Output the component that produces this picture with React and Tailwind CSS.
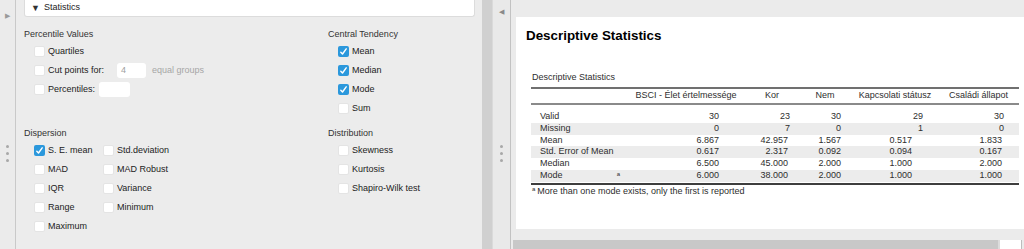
import React from 'react';

const ROWS = [
  { label: 'Valid', int: true, vals: ['30', '23', '30', '29', '30'] },
  { label: 'Missing', int: true, vals: ['0', '7', '0', '1', '0'] },
  { label: 'Mean', vals: ['6.867', '42.957', '1.567', '0.517', '1.833'] },
  { label: 'Std. Error of Mean', vals: ['0.617', '2.317', '0.092', '0.094', '0.167'] },
  { label: 'Median', vals: ['6.500', '45.000', '2.000', '1.000', '2.000'] },
  { label: 'Mode', note: 'a', vals: ['6.000', '38.000', '2.000', '1.000', '1.000'] },
];

const HEADERS = ['BSCI - Élet értelmessége', 'Kor', 'Nem', 'Kapcsolati státusz', 'Családi állapot'];

// right padding per column, integers sit a little further right in some columns
const PAD_DEC = ['pr-[27px]', 'pr-[10px]', 'pr-[11px]', 'pr-[26px]', 'pr-[17px]'];
const PAD_INT = ['pr-[27px]', 'pr-[8px]', 'pr-[11px]', 'pr-[15px]', 'pr-[15px]'];

function Check({ on }) {
  if (on) {
    return (
      <span className="w-[11px] h-[11px] rounded-[2px] bg-[#2b98dc] flex items-center justify-center shrink-0">
        <svg viewBox="0 0 11 11" className="w-[11px] h-[11px]">
          <path d="M2.8 6.2 L4.5 8 L8.2 2.8" stroke="white" strokeWidth="1.4" fill="none" strokeLinecap="round" strokeLinejoin="round" />
        </svg>
      </span>
    );
  }
  return <span className="w-[11px] h-[11px] rounded-[2px] bg-white border border-[#e4e4e4] shrink-0" />;
}

function Opt({ label, on, children }) {
  return (
    <div className="h-[19px] flex items-center gap-[3px]">
      <Check on={on} />
      <span className="whitespace-nowrap">{label}</span>
      {children}
    </div>
  );
}

function Section({ title, children }) {
  return (
    <div>
      <div className="h-[12px] leading-[12px] text-[#333]">{title}</div>
      <div className="mt-[2px] pl-[10px]">{children}</div>
    </div>
  );
}

function Dots() {
  return (
    <div className="flex flex-col gap-[4px]">
      <span className="w-[3px] h-[3px] rounded-full bg-[#a8a8a8]" />
      <span className="w-[3px] h-[3px] rounded-full bg-[#a8a8a8]" />
      <span className="w-[3px] h-[3px] rounded-full bg-[#a8a8a8]" />
    </div>
  );
}

export default function App() {
  return (
    <div className="w-[1024px] h-[249px] flex overflow-hidden font-['Liberation_Sans',Arial,sans-serif] text-[9px] text-[#222] bg-[#ececec]">
      {/* left handle */}
      <div className="w-[16px] shrink-0 bg-[#ebebeb] border-r border-[#c9c9c9] flex flex-col items-center">
        <span className="mt-[12px] text-[7px] leading-[8px] text-[#9a9a9a]">▶</span>
        <div className="mt-[125px]"><Dots /></div>
      </div>

      {/* options panel */}
      <div className="w-[466px] shrink-0 bg-[#ececec] flex flex-col">
        <div className="ml-[8px] mr-[7px] h-[17px] bg-white border border-t-0 border-[#dcdcdc] rounded-b-[3px] flex items-center pl-[6px] gap-[4px]">
          <span className="text-[9px] leading-[9px] text-[#333]">▼</span>
          <span>Statistics</span>
        </div>

        <div className="grid grid-cols-[304px_1fr] gap-y-[9px] pl-[8px] pt-[11px]">
          <Section title="Percentile Values">
            <Opt label="Quartiles" />
            <Opt label="Cut points for:">
              <span className="ml-[10px] w-[29px] h-[15px] bg-white rounded-[3px] text-[#a0a0a0] pl-[4px] leading-[15px]">4</span>
              <span className="ml-[3px] text-[#a6a6a6]">equal groups</span>
            </Opt>
            <Opt label="Percentiles:">
              <span className="ml-[1px] w-[31px] h-[15px] bg-white rounded-[3px]" />
            </Opt>
          </Section>
          <Section title="Central Tendency">
            <Opt label="Mean" on />
            <Opt label="Median" on />
            <Opt label="Mode" on />
            <Opt label="Sum" />
          </Section>
          <Section title="Dispersion">
            <div className="grid grid-cols-[69px_auto] w-[180px]">
              <Opt label="S. E. mean" on />
              <Opt label="Std.deviation" />
              <Opt label="MAD" />
              <Opt label="MAD Robust" />
              <Opt label="IQR" />
              <Opt label="Variance" />
              <Opt label="Range" />
              <Opt label="Minimum" />
              <Opt label="Maximum" />
            </div>
          </Section>
          <Section title="Distribution">
            <Opt label="Skewness" />
            <Opt label="Kurtosis" />
            <Opt label="Shapiro-Wilk test" />
          </Section>
        </div>
      </div>

      {/* splitter */}
      <div className="w-[11px] shrink-0 bg-[#d0d0d0] border-r border-[#dadada]" />
      <div className="w-[18px] shrink-0 bg-[#e9e9e9] border-r border-[#c2c2c2] flex flex-col items-center">
        <span className="mt-[8px] text-[7px] leading-[8px] text-[#8a8a8a]">◀</span>
        <div className="mt-[129px]"><Dots /></div>
      </div>

      {/* output */}
      <div className="flex-1 flex flex-col bg-[#ebebeb]">
        <div className="ml-[5px] mt-[17px] h-[212px] bg-white flex flex-col">
          <div className="mt-[11px] ml-[10px] h-[16px] leading-[16px] text-[13.4px] font-bold text-black">Descriptive Statistics</div>

          <div className="mt-[27px] ml-[15px] w-[488px] text-[#2e2e2e]">
            <div className="h-[12px] leading-[12px] pl-[1px]">Descriptive Statistics</div>
            <div className="mt-[4px] h-[2px] bg-[#707070]" />
            <div className="grid grid-cols-[95px_120px_52px_54px_86px_81px] h-[14px] items-center">
              <div />
              {HEADERS.map((h) => (
                <div key={h} className="text-center whitespace-nowrap">{h}</div>
              ))}
            </div>
            <div className="h-[2px] bg-[#8a8a8a]" />
            <div className="h-[6px]" />
            {ROWS.map((r, i) => (
              <div
                key={r.label}
                className={`grid grid-cols-[95px_120px_52px_54px_86px_81px] h-[11.8px] leading-[11.8px] ${i % 2 === 1 ? 'bg-[#ececec]' : ''}`}
              >
                <div className="flex pl-[9px] pr-[6px]">
                  <span>{r.label}</span>
                  {r.note && <span className="ml-auto text-[6px] leading-[9px]">{r.note}</span>}
                </div>
                {r.vals.map((v, j) => (
                  <div key={j} className={`text-right ${r.int ? PAD_INT[j] : PAD_DEC[j]}`}>{v}</div>
                ))}
              </div>
            ))}
            <div className="mt-[1px] h-[2px] bg-[#3e3e3e]" />
            <div className="h-[12px] leading-[12px] pl-[1px]">
              <sup className="text-[6px] mr-[2px]">a</sup>More than one mode exists, only the first is reported
            </div>
          </div>
        </div>

        <div className="mt-[11px] h-[9px] flex">
          <div className="ml-[2px] w-[485px] bg-[#c8c8c8]" />
          <div className="w-[2px] bg-[#dcdcdc]" />
          <div className="w-[22px] bg-white border-r border-[#bdbdbd]" />
        </div>
      </div>
    </div>
  );
}
